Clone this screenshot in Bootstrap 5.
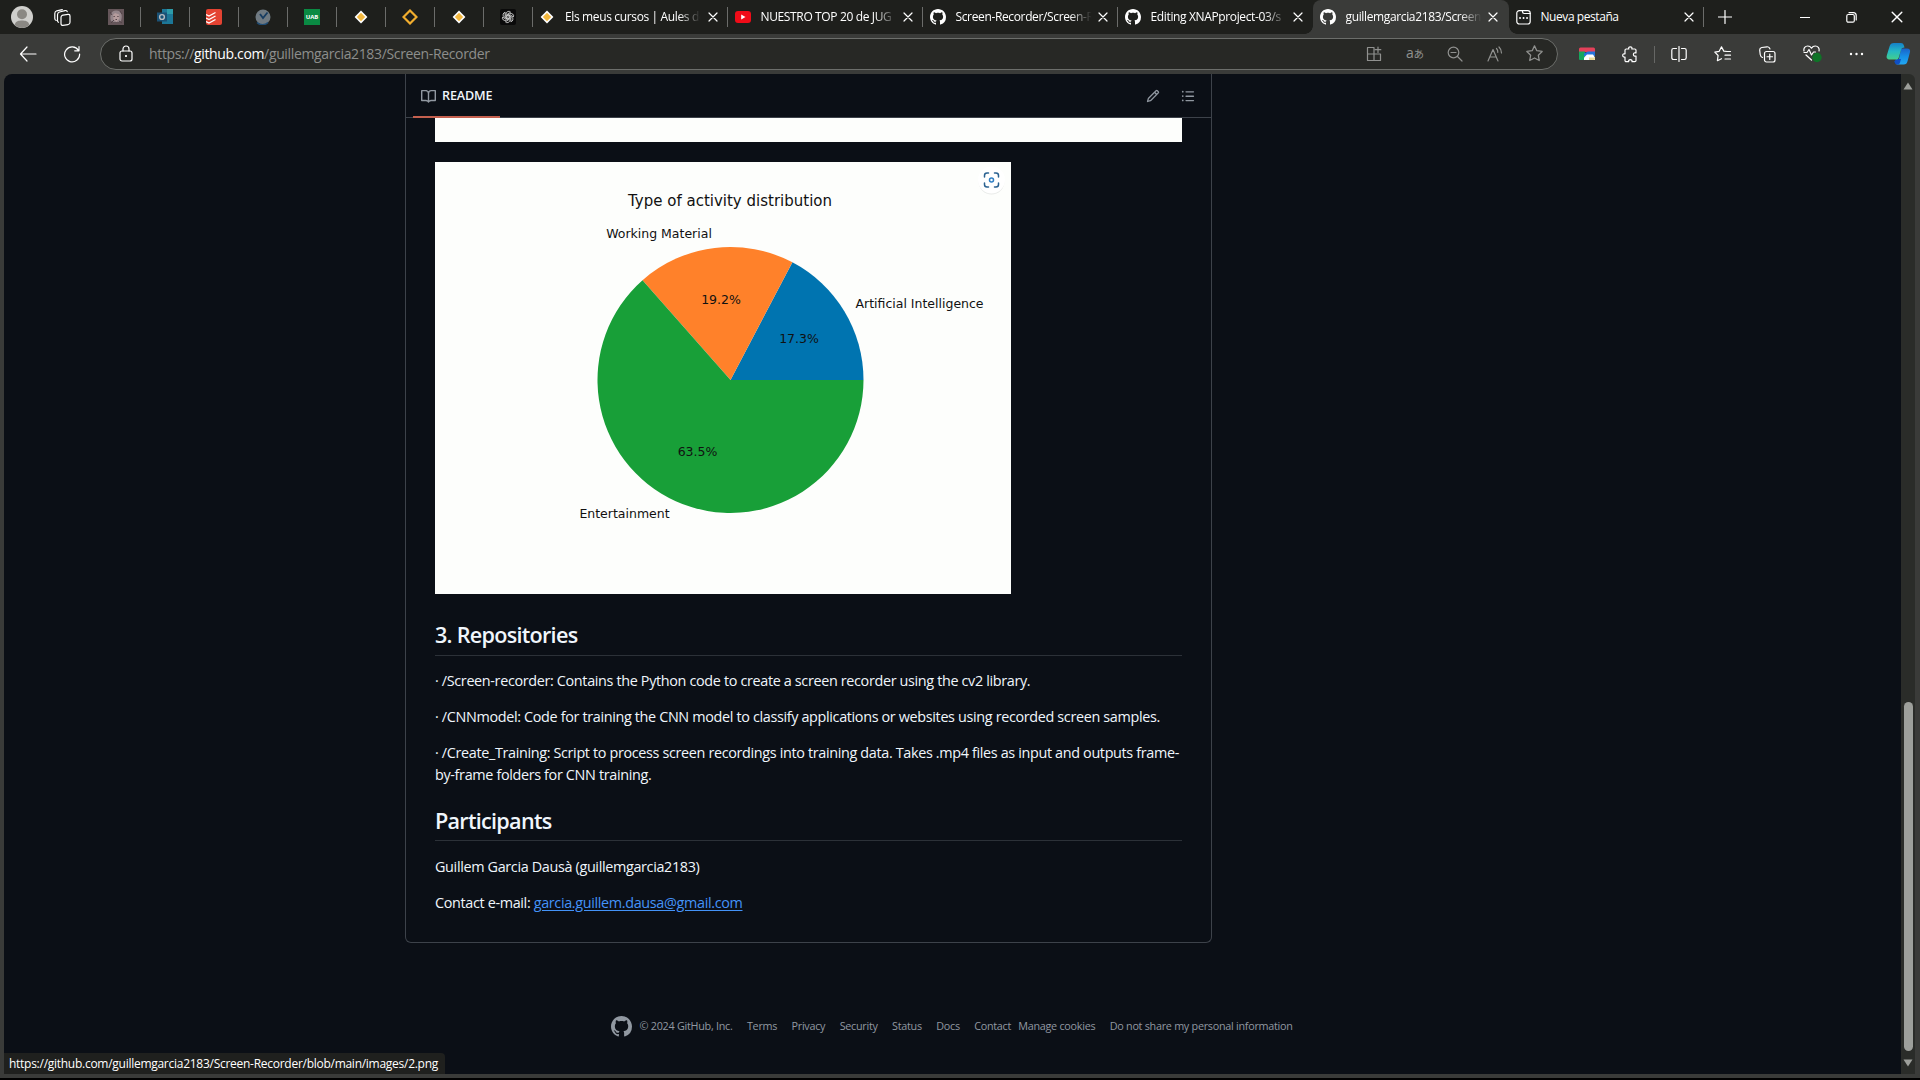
<!DOCTYPE html>
<html lang="en">
<head>
<meta charset="utf-8">
<title>guillemgarcia2183/Screen-Recorder</title>
<link href="https://cdn.jsdelivr.net/npm/bootstrap@5.3.0/dist/css/bootstrap.min.css" rel="stylesheet">
<style>
html,body{height:100%;overflow:hidden}
body{background:#000;font-family:"Open Sans","Noto Sans CJK JP",sans-serif;color:#fff}
svg{display:block;flex:none}
.ln{fill:none;stroke:currentColor;stroke-width:1.2;stroke-linecap:round;stroke-linejoin:round}
.window-frame{height:1078px;background:#3a3b39}
.tab-strip{height:34px;background:#1e1f1c;font-size:12px;letter-spacing:-.03em}
.profile{width:91.5px;padding-left:11px;gap:21px}
.pin,.tab{height:34px;position:relative}
.pin{width:49px;padding-left:16.5px}
.tab{width:195px;padding:0 10px 0 7px}
.tab.first{padding-left:6.5px}
.pin::after,.tab.sep::after{content:"";position:absolute;right:0;top:7px;width:1px;height:20px;background:#6b6c6a}
.tab-title{width:137px;margin-left:10px;white-space:nowrap;overflow:hidden;-webkit-mask-image:linear-gradient(90deg,#000 83%,transparent 99%);mask-image:linear-gradient(90deg,#000 83%,transparent 99%)}
.tab-title.whole{-webkit-mask-image:none;mask-image:none;letter-spacing:-.036em}
.tab.current{background:#3a3b39;border-radius:8px 8px 0 0;width:196px;padding-right:11px}
.tab.current::before,.tab.current::after{content:"";position:absolute;bottom:0;width:8px;height:8px}
.tab.current::before{left:-8px;background:radial-gradient(circle at 0 0,transparent 7.5px,#3a3b39 8px)}
.tab.current::after{right:-8px;background:radial-gradient(circle at 100% 0,transparent 7.5px,#3a3b39 8px)}
.new-tab{margin-left:14px}
.win-btn{width:46px}
.toolbar{height:40px;padding-left:19px;gap:26px}
.address{width:1458px;height:32px;margin-left:-7px;margin-top:-1px;border:1px solid #6c6e6b;border-radius:16px;background:#272825;font-size:14px;letter-spacing:-.025em;color:#8d8e8c;padding:0 14px 0 17px}
.url{margin-left:15px}
.address-icons{color:#90918f;gap:23.5px}
.tools{margin-left:-5px;gap:27px}
.tool-rule{width:1px;height:17px;background:#666765;margin:0 -11.5px 0 -12px}
.copilot{margin-left:-6px}
.page-view{height:1000px;margin-left:4px;width:1897px;background:#0b0f16;border-top-left-radius:8px;position:relative}
.scroll-gutter{width:14px;height:1000px;background:#2a2c29;border-top-right-radius:6px;padding:8px 0 7px}
.scroll-thumb{width:9px;height:349px;border-radius:5px;background:#9d9f9b}
.readme{width:807px;margin-left:401px;height:869px;border:1px solid #3d424a;border-top:0;border-radius:0 0 6px 6px}
.readme-head{height:44px;border-bottom:1px solid #3d424a;padding:0 16px 0 7px;color:#9198a1;gap:21px}
.readme-tab{height:45px;width:87px;padding:4px 0 0 8px;gap:6px;border-bottom:2px solid #c4604f;font-size:12.6px;font-weight:600;color:#f0f6fc;letter-spacing:-.012em}
.readme-text{padding:0 29px;font-size:14.4px;line-height:21.6px;letter-spacing:-.0240em;color:#f0f6fc}
.readme-text p{margin:0 0 14.4px}
.readme-text h2{font-size:21.6px;font-weight:600;line-height:27px;letter-spacing:-.0335em;padding-bottom:6.5px;margin:21.6px 0 14.4px;border-bottom:1px solid #2c3138}
.figure-top{height:24px;background:#fdfefc;margin:0 0 20px}
.chart{margin-bottom:27.2px;font-family:"DejaVu Sans",sans-serif;letter-spacing:0}
.mail{color:#4493f8;text-underline-offset:2px}
.foot{margin-left:607px;margin-top:70px;font-size:10.8px;letter-spacing:-.025em;color:#9198a1;height:26px;white-space:nowrap;gap:14.4px}
.owner{gap:7.5px}
.foot-pair{gap:7.2px}
.status{position:absolute;left:0;bottom:0;width:441px;height:21px;background:#1f201e;border-top-right-radius:4px;font-size:12px;padding-left:5px;line-height:21px;letter-spacing:-.0225em;white-space:nowrap}
</style>
<script src="https://cdn.jsdelivr.net/npm/bootstrap@5.3.0/dist/js/bootstrap.bundle.min.js"></script>
</head>
<body>
<svg width="0" height="0" class="position-absolute">
<defs>
<symbol id="gh" viewBox="0 0 16 16"><path fill="currentColor" d="M8 0C3.58 0 0 3.58 0 8c0 3.54 2.29 6.53 5.47 7.59.4.07.55-.17.55-.38 0-.19-.01-.82-.01-1.49-2.01.37-2.53-.49-2.69-.94-.09-.23-.48-.94-.82-1.13-.28-.15-.68-.52-.01-.53.63-.01 1.08.58 1.23.82.72 1.21 1.87.87 2.33.66.07-.52.28-.87.51-1.07-1.78-.2-3.64-.89-3.64-3.95 0-.87.31-1.59.82-2.15-.08-.2-.36-1.02.08-2.12 0 0 .67-.21 2.2.82.64-.18 1.32-.27 2-.27s1.36.09 2 .27c1.53-1.04 2.2-.82 2.2-.82.44 1.1.16 1.92.08 2.12.51.56.82 1.27.82 2.15 0 3.07-1.87 3.75-3.65 3.95.29.25.54.73.54 1.48 0 1.07-.01 1.93-.01 2.2 0 .21.15.46.55.38A8.01 8.01 0 0 0 16 8c0-4.42-3.58-8-8-8z"/></symbol>
<symbol id="moodle" viewBox="0 0 16 16"><path d="M8 1.6 14.4 8 8 14.4 1.6 8z" fill="#fff"/><path d="M8 3.8 12.2 8 8 12.2 3.8 8z" fill="#f3b83f"/></symbol>
<symbol id="close" viewBox="0 0 10 10"><path class="ln" d="M1 1l8 8M9 1 1 9"/></symbol>
<linearGradient id="cp1" x1="0" y1="0" x2="0" y2="1"><stop offset="0" stop-color="#1580c8"/><stop offset=".5" stop-color="#25b8c4"/><stop offset="1" stop-color="#43cf8c"/></linearGradient>
<linearGradient id="cp2" x1="0" y1="0" x2="0" y2="1"><stop offset="0" stop-color="#1b62c8"/><stop offset=".5" stop-color="#168fe6"/><stop offset="1" stop-color="#22a7f2"/></linearGradient>
</defs>
</svg>
<div class="window-frame">
  <header class="tab-strip d-flex align-items-center">
    <div class="profile d-flex align-items-center">
      <svg width="22" height="22" viewBox="0 0 22 22"><circle cx="11" cy="11" r="11" fill="#cfcfcc"/><circle cx="11" cy="8.3" r="5" fill="#8a8883"/><path d="M3.6 19.1C4.5 15 8 14.6 11 14.6s6.5.4 7.4 4.500A11 11 0 0 1 3.6 19.1z" fill="#8a8883"/></svg>
      <svg class="ln" width="17" height="17" viewBox="0 0 17 17"><rect x="7" y="6.300" width="9" height="10.300" rx="2" transform="skewY(-8) translate(0 1)"/><path d="M4.500 13.300c-.8-.3-1-.8-1-1.800V5.800c0-1.600.6-2.300 2-2.800l5.500-1.400c1.300-.3 2 .2 2.200 1.100M2.200 11.500c-.9-.3-1.400-.8-1.400-2V4.400c0-1.500.7-2.200 2-2.600L8.300.7"/></svg>
    </div>
    <div class="pin d-flex align-items-center"><svg width="16" height="16" viewBox="0 0 16 16"><path fill="#65565a" d="M0 0h16v16H0z"/><path d="M3 12C1 6 4 1 8.500 1.500 13 1.500 15 6 13 12l-2 1H5z" fill="#94858a"/><path d="M5 6l2-2 4 1.500.500 4-3 3.500-3-2.500z" fill="#b59c9d"/><path d="M5.500 7.500h1.300m2.500 0h1.300M7.500 10.500h1.500M2 3l2 3M12 2l2 3M3 14l3-3m5 1 3 2" stroke="#534449"/></svg></div>
    <div class="pin d-flex align-items-center"><svg width="16" height="16" viewBox="0 0 16 16"><path fill="#1c7797" d="M5 0h11v15H5z"/><path fill="#2c9ba9" d="M10 0h6v5h-6z"/><path fill="#176385" d="M5 5h5v5H5z"/><path fill="#1a5276" d="M0 3.500h10v9H0z"/><circle cx="5" cy="8" r="2.400" fill="none" stroke="#b7bdc2" stroke-width="1.400"/></svg></div>
    <div class="pin d-flex align-items-center"><svg width="16" height="16" viewBox="0 0 16 16"><rect width="16" height="16" rx="2" fill="#e44332"/><path d="M0 5.500 3 7l6.500-3.500M0 9l3 1.500L9.500 7M0 12.500 3 14l6.500-3.500" fill="none" stroke="#fff" stroke-width="1.300"/></svg></div>
    <div class="pin d-flex align-items-center"><svg width="16" height="16" viewBox="0 0 16 16"><circle cx="8" cy="8" r="7.500" fill="#707a82"/><path d="M2 13.500a8 8 0 0 0 11 0" stroke="#1f4d76" stroke-width="1.500" fill="none"/><path d="M5 5l3 4 4.500-5.500" stroke="#173c61" stroke-width="1.800" fill="none"/></svg></div>
    <div class="pin d-flex align-items-center"><svg width="16" height="16" viewBox="0 0 16 16"><path fill="#0a8a43" d="M0 0h16v16H0z"/><text x="8" y="10.300" font-size="6" font-weight="700" fill="#fff" text-anchor="middle" letter-spacing="0">UAB</text></svg></div>
    <div class="pin d-flex align-items-center"><svg width="16" height="16"><use href="#moodle"/></svg></div>
    <div class="pin d-flex align-items-center"><svg width="16" height="16" viewBox="0 0 16 16"><path d="M8 1.500 14.500 8 8 14.500 1.500 8z" fill="none" stroke="#f2ae2e" stroke-width="2.200"/></svg></div>
    <div class="pin d-flex align-items-center"><svg width="16" height="16"><use href="#moodle"/></svg></div>
    <div class="pin d-flex align-items-center"><svg width="16" height="16" viewBox="-8 -8 16 16"><rect x="-8" y="-8" width="16" height="16" rx="2" fill="#0a0a0a"/><g fill="none" stroke="#ddd" stroke-width=".8"><g id="pt"><path d="M-1.800 1V-3.300a2.500 2.500 0 0 1 4.400-1.500L-.6-2.900V-.5"/></g><use href="#pt" transform="rotate(60)"/><use href="#pt" transform="rotate(120)"/><use href="#pt" transform="rotate(180)"/><use href="#pt" transform="rotate(240)"/><use href="#pt" transform="rotate(300)"/></g></svg></div>
    <div class="tab first sep d-flex align-items-center"><svg width="16" height="16"><use href="#moodle"/></svg><span class="tab-title">Els meus cursos | Aules de</span><svg class="ms-auto" width="10" height="10"><use href="#close"/></svg></div>
    <div class="tab sep d-flex align-items-center"><svg width="16" height="16" viewBox="0 0 16 16"><rect y="2" width="16" height="12" rx="3" fill="#f00c18"/><path d="M6.200 5.500v5L10.500 8z" fill="#fff"/></svg><span class="tab-title">NUESTRO TOP 20 de JUG</span><svg class="ms-auto" width="10" height="10"><use href="#close"/></svg></div>
    <div class="tab sep d-flex align-items-center"><svg width="16" height="16"><use href="#gh"/></svg><span class="tab-title">Screen-Recorder/Screen-R</span><svg class="ms-auto" width="10" height="10"><use href="#close"/></svg></div>
    <div class="tab d-flex align-items-center"><svg width="16" height="16"><use href="#gh"/></svg><span class="tab-title">Editing XNAPproject-03/s</span><svg class="ms-auto" width="10" height="10"><use href="#close"/></svg></div>
    <div class="tab current d-flex align-items-center"><svg width="16" height="16"><use href="#gh"/></svg><span class="tab-title">guillemgarcia2183/Screen</span><svg class="ms-auto" width="10" height="10"><use href="#close"/></svg></div>
    <div class="tab sep d-flex align-items-center"><svg class="ln" width="15" height="16" viewBox="0 0 15 16"><rect x=".8" y="1.600" width="13.400" height="13.400" rx="2.500"/><path d="M6.500 1.600v1.200c0 1.200.7 1.700 1.700 1.700h6"/><path d="M4 9h.1M7.500 9h.1M11 9h.1" stroke-width="1.800"/></svg><span class="tab-title whole">Nueva pestaña</span><svg class="ms-auto" width="10" height="10"><use href="#close"/></svg></div>
    <svg class="ln new-tab" width="14" height="14" viewBox="0 0 14 14"><path d="M7 .5v13M.5 7h13"/></svg>
    <div class="d-flex align-items-center ms-auto">
      <div class="win-btn d-flex justify-content-center"><svg class="ln" width="10" height="10" viewBox="0 0 10 10"><path d="M.5 5.500h9"/></svg></div>
      <div class="win-btn d-flex justify-content-center"><svg class="ln" width="11" height="11" viewBox="0 0 11 11"><rect x=".8" y="2.500" width="7.500" height="7.700" rx="1.500"/><path d="M3 .7h4.300c1.900 0 2.900 1 2.900 2.900V8"/></svg></div>
      <div class="win-btn d-flex justify-content-center"><svg width="12" height="12"><use href="#close"/></svg></div>
    </div>
  </header>
  <nav class="toolbar d-flex align-items-center">
    <svg class="ln" width="18" height="18" viewBox="0 0 18 18"><path d="M8 2 1.500 9 8 16M1.500 9H17"/></svg>
    <svg class="ln" width="18" height="18" viewBox="0 0 18 18"><path d="M15.500 5.500A7.500 7.500 0 1 0 16.600 9M16 1.500v4.300h-4.300"/></svg>
    <div class="address d-flex align-items-center">
      <svg class="ln text-white" width="16" height="17" viewBox="0 0 16 17"><rect x="2" y="6" width="12" height="10" rx="2"/><path d="M5 6V4a3 3 0 0 1 6 0v2"/><circle cx="8" cy="11" r=".5" fill="currentColor"/></svg>
      <span class="url">https://<span class="text-white">github.com</span>/guillemgarcia2183/Screen-Recorder</span>
      <div class="address-icons d-flex align-items-center ms-auto">
        <svg class="ln" width="16" height="16" viewBox="0 0 16 16"><path d="M8 1.500H1.500v13h13V8H1.500M8 1.500v13M12 1v5.500M9.300 3.700h5.500"/></svg>
        <svg width="18" height="18" viewBox="0 0 18 18" fill="currentColor"><text x="0" y="13" font-size="14" letter-spacing="0">a</text><text x="7.500" y="13" font-size="10.500" font-family="Noto Sans CJK JP" letter-spacing="0">あ</text></svg>
        <svg class="ln" width="16" height="16" viewBox="0 0 16 16"><circle cx="6.500" cy="6.500" r="5.300"/><path d="M10.500 10.500 15 15M4 6.500h5"/></svg>
        <svg class="ln" width="16" height="16" viewBox="0 0 16 16"><path d="M1 15 6 3.500 11 15M2.700 11h6.600M9.500 2.500a5 5 0 0 1 1.300 3.800M12 1a8 8 0 0 1 2.500 6"/></svg>
        <svg class="ln" width="17" height="17" viewBox="0 0 16 16"><path d="M8 .8l2.200 4.600 5 .7-3.600 3.500.9 5L8 12.200l-4.500 2.400.9-5L.8 6.100l5-.7z"/></svg>
      </div>
    </div>
    <div class="tools d-flex align-items-center">
      <svg width="16" height="14" viewBox="0 0 16 14"><path d="M0 2a1.500 1.500 0 0 1 1.500-1.500h13A1.500 1.500 0 0 1 16 2v3H0z" fill="#e4415a"/><path d="M0 4.500h6V13H1a1 1 0 0 1-1-1z" fill="#17a75d"/><path d="M5 6.500 9 4.500h7V9H5z" fill="#2474dc"/><path d="M5 13V10.500l3-3h6l2 3V13z" fill="#fff"/><path d="M10 10.500h6V12a1 1 0 0 1-1 1h-5z" fill="#e8d995"/></svg>
      <svg class="ln" width="17" height="17" viewBox="0 0 17 17"><path d="M4.200 3h2.600C6.300 1.800 7 .8 8.300.8s2 1 1.500 2.200h3a1.200 1.200 0 0 1 1.200 1.200V7c-1.400-.5-2.600.2-2.600 1.500s1.200 2 2.600 1.500v4.500a1.200 1.200 0 0 1-1.200 1.200H10c.4-1.200-.4-2-1.700-2s-2 .8-1.600 2H4.200A1.200 1.200 0 0 1 3 14.500V11c-1.300.3-2.300-.4-2.300-1.600S1.700 7.500 3 7.900V4.200A1.200 1.200 0 0 1 4.200 3z"/></svg>
      <span class="tool-rule"></span>
      <svg class="ln" width="16" height="16" viewBox="0 0 16 16"><path d="M8 .5v15M5.500 2.500h-3A1.700 1.700 0 0 0 .8 4.200v7.600a1.700 1.700 0 0 0 1.700 1.700h3m5-11h3a1.700 1.700 0 0 1 1.700 1.700v7.600a1.700 1.700 0 0 1-1.700 1.700h-3"/></svg>
      <svg class="ln" width="18" height="16" viewBox="0 0 18 16"><path d="M13 5.500l-3.200-.4L7.500.8 5.200 5.300.8 6.200l3.300 3.300-.7 5.200 4.100-2M11 5.500h5.500M11 9.200h5.500M11 13h5.500"/></svg>
      <svg class="ln" width="17" height="17" viewBox="0 0 17 17"><rect x="5.500" y="5.500" width="10.500" height="10.500" rx="2"/><path d="M10.750 8v5.500M8 10.750h5.500M3.500 11.500C2 11 1.500 10 1.200 8.500L.7 4.300C.6 2.800 1.300 1.800 2.700 1.500L8 .8c1.600-.2 2.500.6 3 2.200"/></svg>
      <svg width="19" height="18" viewBox="0 0 19 18"><path class="ln" d="M1 6C.3 3 2.300 1 4.700 1 6.500 1 7.800 2 8.500 3.200 9.200 2 10.500 1 12.300 1c2.400 0 4.400 2 3.700 5M1 7.500h3l2-3 2.500 5.500L10.500 7h2M3 10l5.500 5"/><circle cx="14" cy="12.500" r="4.700" fill="#0f7327"/></svg>
      <svg width="16" height="16" viewBox="0 0 16 16" fill="currentColor"><circle cx="2" cy="8" r="1.200"/><circle cx="7.500" cy="8" r="1.200"/><circle cx="13" cy="8" r="1.200"/></svg>
      <svg class="copilot" width="25" height="24" viewBox="0 0 25 24"><path d="M15 6.500h6c2.500 0 3.500 1.700 3 3.600l-2.400 8.800c-.6 2.200-1.700 3.600-4 3.600H9.500c2 0 2.600-1.500 3-3z" fill="url(#cp2)"/><path d="M10 17h5l-1 3.500c-.5 1.400-1.400 2-2.800 2-2 0-2.500-1.500-2.800-3z" fill="#0f4fc4"/><path d="M8 1h7c1.500 0 2.300.7 2.700 2l.8 2.500c-2 0-3 .7-3.500 2.500l-2.200 7.500c-.4 1.500-1.300 2-2.700 2H4c-3 0-3.800-1.800-3.200-4L3.500 4.400C4.200 2.200 5.500 1 8 1z" fill="url(#cp1)"/></svg>
    </div>
  </nav>
  <div class="d-flex">
    <main class="page-view">
      <section class="readme">
        <div class="readme-head d-flex align-items-center">
          <div class="readme-tab d-flex align-items-center"><svg width="15" height="15" viewBox="0 0 16 16" fill="#9198a1"><path d="M0 1.750A.750.750 0 0 1 .750 1h4.253c1.227 0 2.317.590 3 1.501A3.743 3.743 0 0 1 11.006 1h4.245a.750.750 0 0 1 .750.750v10.500a.750.750 0 0 1-.750.750h-4.507a2.250 2.250 0 0 0-1.591.659l-.622.621a.750.750 0 0 1-1.060 0l-.622-.621A2.250 2.250 0 0 0 5.258 13H.750a.750.750 0 0 1-.750-.750Zm7.251 10.324.004-5.073-.002-2.253A2.250 2.250 0 0 0 5.003 2.500H1.500v9h3.757a3.750 3.750 0 0 1 1.994.574ZM8.755 4.750l-.004 7.322a3.752 3.752 0 0 1 1.992-.572H14.500v-9h-3.495a2.250 2.250 0 0 0-2.250 2.250Z"/></svg>README</div>
          <svg class="ms-auto" width="14" height="14" viewBox="0 0 16 16" fill="currentColor"><path d="M11.013 1.427a1.750 1.750 0 0 1 2.474 0l1.086 1.086a1.750 1.750 0 0 1 0 2.474l-8.610 8.610c-.210.210-.470.364-.756.445l-3.251.930a.750.750 0 0 1-.927-.928l.929-3.250c.081-.286.235-.547.445-.758l8.610-8.610Zm.176 4.823L9.750 4.810l-6.286 6.287a.253.253 0 0 0-.064.108l-.558 1.953 1.953-.558a.253.253 0 0 0 .108-.064Zm1.238-3.763a.250.250 0 0 0-.354 0L10.811 3.750l1.439 1.440 1.263-1.263a.250.250 0 0 0 0-.354Z"/></svg>
          <svg width="14" height="14" viewBox="0 0 16 16" fill="currentColor"><path d="M5.750 2.500h8.500a.750.750 0 0 1 0 1.500h-8.500a.750.750 0 0 1 0-1.500Zm0 5h8.500a.750.750 0 0 1 0 1.500h-8.500a.750.750 0 0 1 0-1.500Zm0 5h8.500a.750.750 0 0 1 0 1.500h-8.500a.750.750 0 0 1 0-1.500ZM2 14a1 1 0 1 1 0-2 1 1 0 0 1 0 2Zm1-6a1 1 0 1 1-2 0 1 1 0 0 1 2 0ZM2 4a1 1 0 1 1 0-2 1 1 0 0 1 0 2Z"/></svg>
        </div>
        <article class="readme-text">
          <div class="figure-top"></div>
          <svg class="chart" width="576" height="432" viewBox="0 0 576 432">
            <rect width="576" height="432" fill="#fdfefc"/>
            <path d="M295.500 218H428.500A133 133 0 0 0 357.400 100.300z" fill="#0074b0"/>
            <path d="M295.500 218 357.400 100.300A133 133 0 0 0 207.500 118.200z" fill="#ff812a"/>
            <path d="M295.500 218 207.500 118.200A133 133 0 1 0 428.500 218z" fill="#189f38"/>
            <g text-anchor="middle" font-size="12.500" fill="#111">
              <text x="295" y="44" font-size="15">Type of activity distribution</text>
              <text x="224" y="76">Working Material</text>
              <text x="484.500" y="146">Artificial Intelligence</text>
              <text x="286" y="142">19.2%</text><text x="364" y="181">17.3%</text><text x="262.500" y="294">63.5%</text>
              <text x="189.500" y="355.500">Entertainment</text>
            </g>
            <circle cx="556.500" cy="19.500" r="13" fill="#e9ebe9"/><circle cx="556.500" cy="18" r="13.500" fill="#fff"/>
            <g fill="none" stroke="#2a6190" stroke-width="1.500" stroke-linecap="round"><path d="M549.500 15v-1.500a2.500 2.500 0 0 1 2.500-2.500h1.500M559.500 11h1.500a2.500 2.500 0 0 1 2.500 2.500V15M563.500 21v1.500a2.500 2.500 0 0 1-2.500 2.500h-1.500M553.500 25H552a2.500 2.500 0 0 1-2.500-2.500V21"/><circle cx="556.500" cy="18" r="2" stroke="#2f7fc4"/></g>
          </svg>
          <h2>3. Repositories</h2>
          <p>· /Screen-recorder: Contains the Python code to create a screen recorder using the cv2 library.</p>
          <p>· /CNNmodel: Code for training the CNN model to classify applications or websites using recorded screen samples.</p>
          <p>· /Create_Training: Script to process screen recordings into training data. Takes .mp4 files as input and outputs frame-<br>by-frame folders for CNN training.</p>
          <h2>Participants</h2>
          <p>Guillem Garcia Dausà (guillemgarcia2183)</p>
          <p>Contact e-mail: <a class="mail" href="#">garcia.guillem.dausa@gmail.com</a></p>
        </article>
      </section>
      <footer class="foot d-flex align-items-center">
        <div class="owner d-flex align-items-center"><svg width="21" height="21"><use href="#gh"/></svg><span>© 2024 GitHub, Inc.</span></div>
        <span>Terms</span><span>Privacy</span><span>Security</span><span>Status</span><span>Docs</span>
        <div class="foot-pair d-flex"><span>Contact</span><span>Manage cookies</span></div>
        <span>Do not share my personal information</span>
      </footer>
      <div class="status">https://github.com/guillemgarcia2183/Screen-Recorder/blob/main/images/2.png</div>
    </main>
    <div class="scroll-gutter d-flex flex-column align-items-center">
      <svg width="10" height="8" viewBox="0 0 10 8"><path d="M5 .5 9.500 7.500H.5z" fill="#9d9f9b"/></svg>
      <div class="scroll-thumb mt-auto mb-2"></div>
      <svg width="10" height="8" viewBox="0 0 10 8"><path d="M5 7.500 9.500.5H.5z" fill="#9d9f9b"/></svg>
    </div>
  </div>
</div>
</body>
</html>
